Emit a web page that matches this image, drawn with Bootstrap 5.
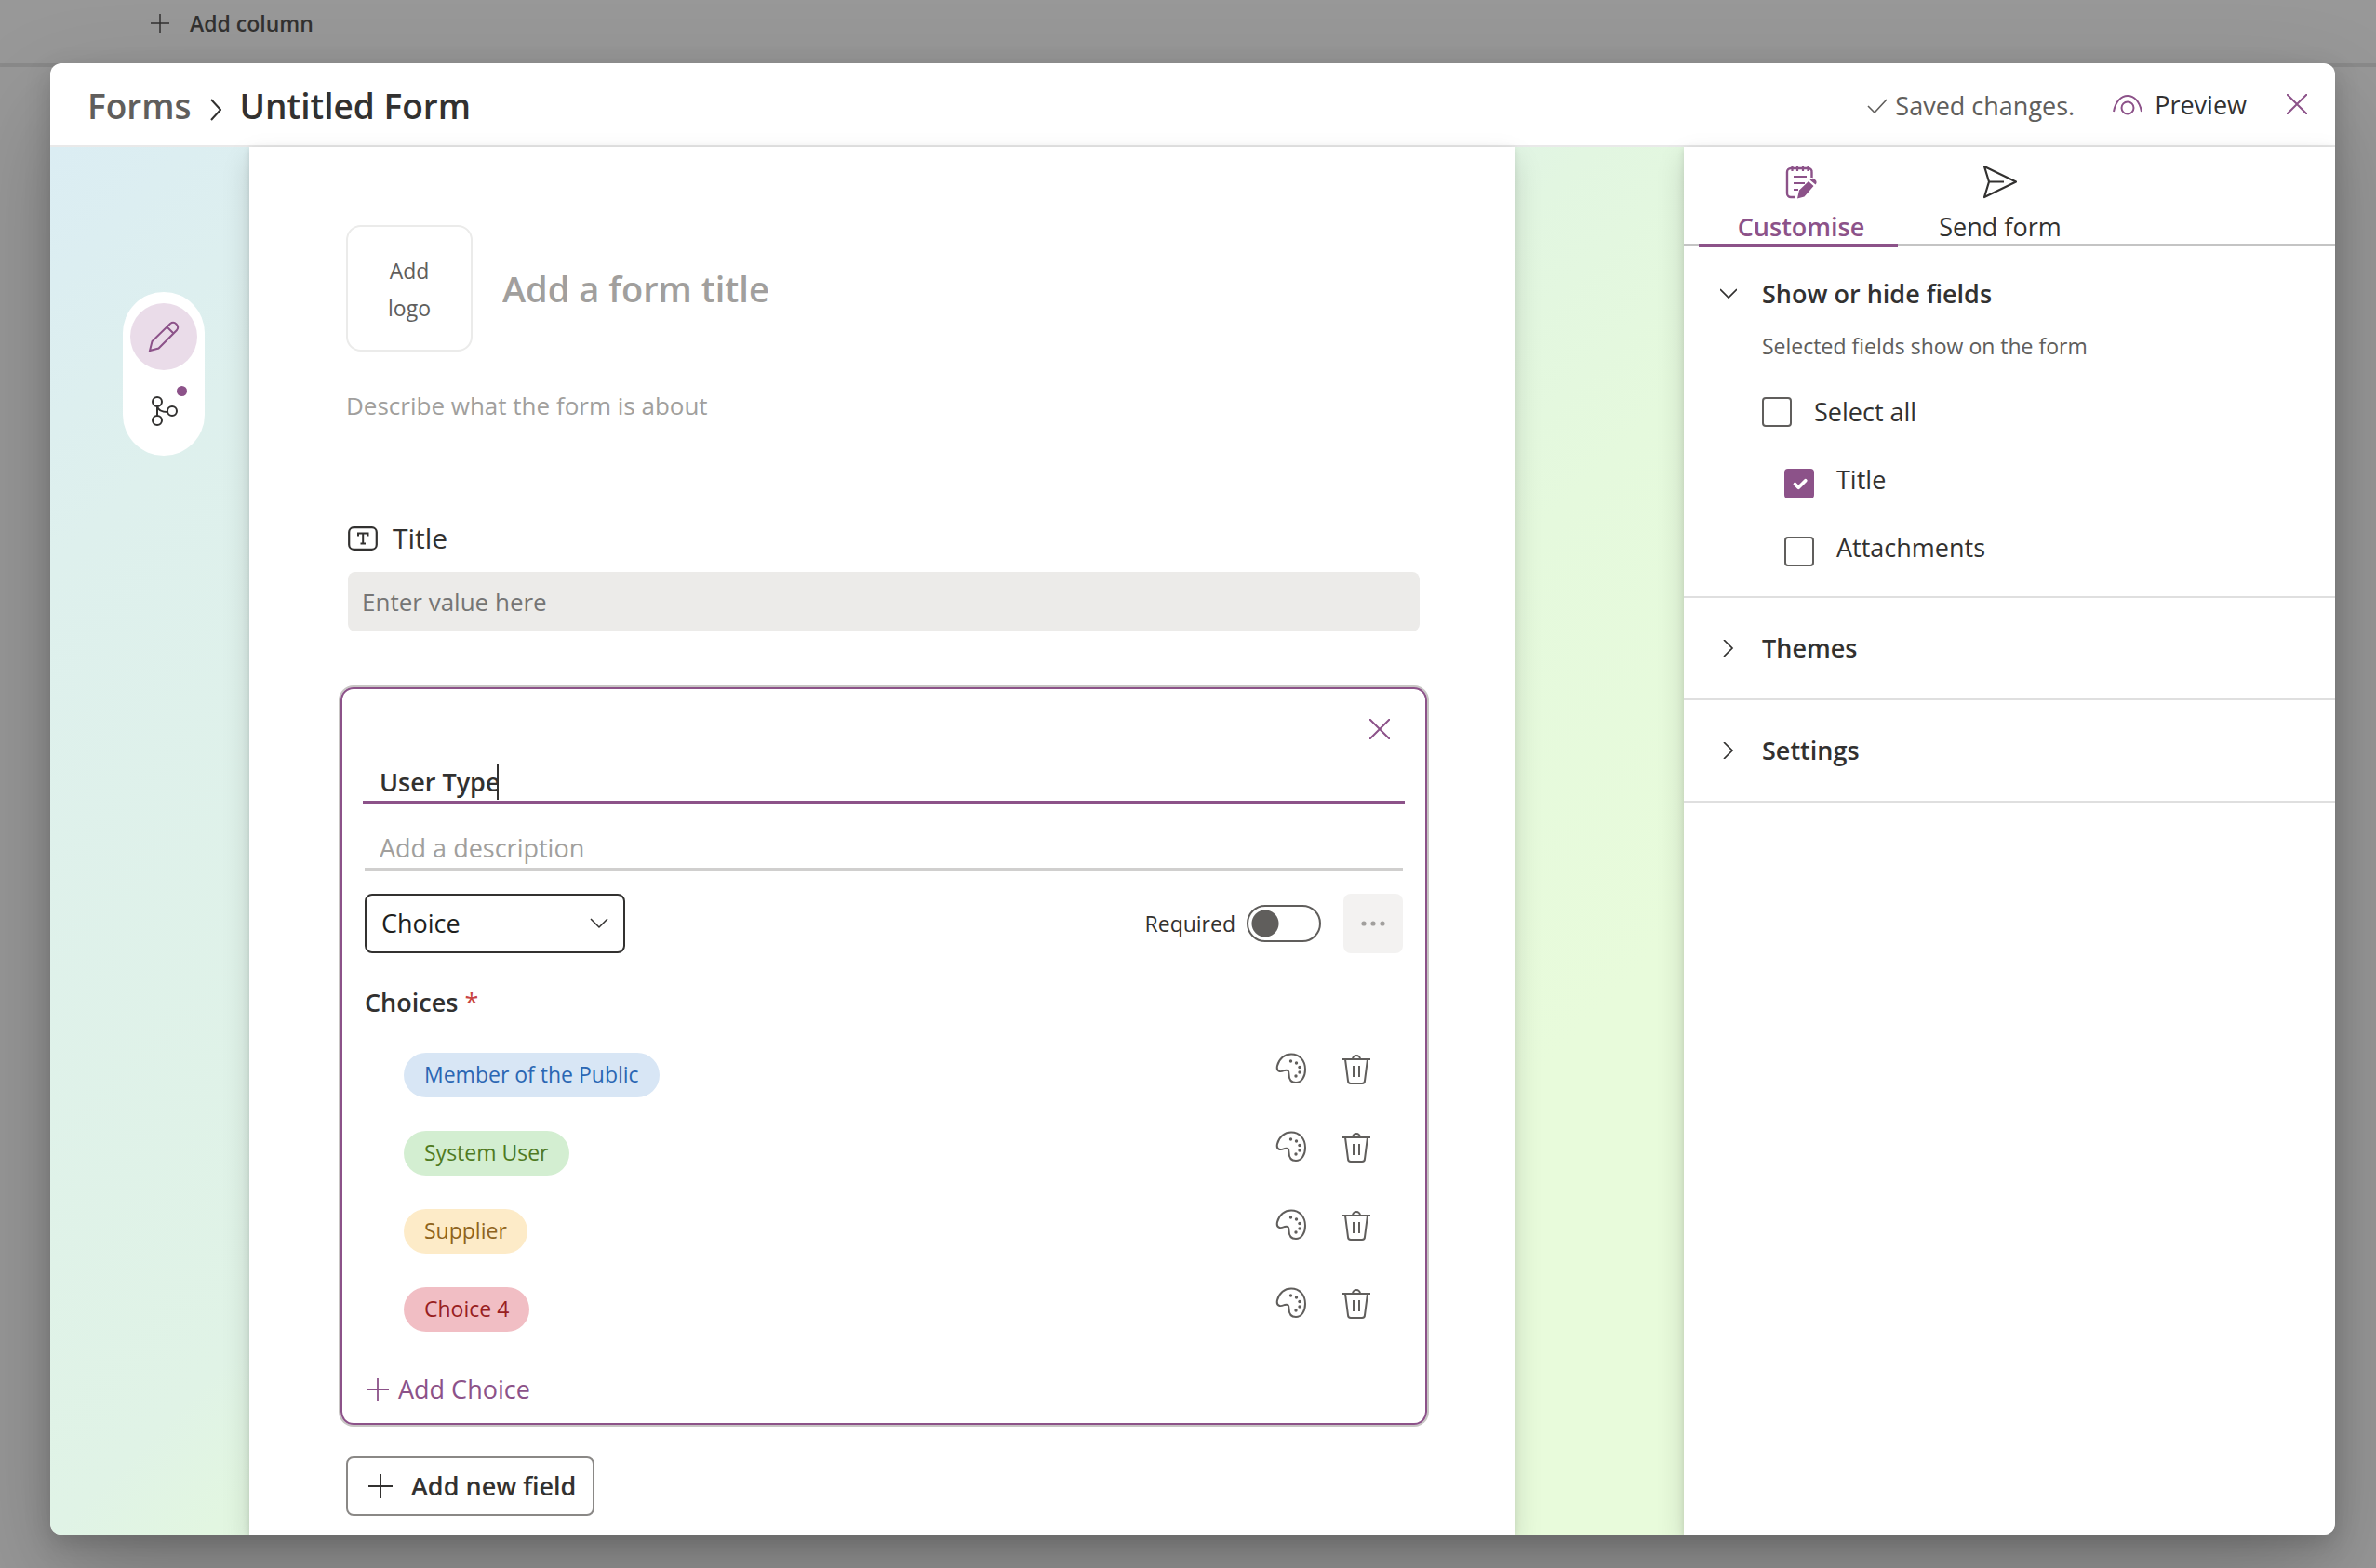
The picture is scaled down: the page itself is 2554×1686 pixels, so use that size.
<!DOCTYPE html>
<html lang="en">
<head>
<meta charset="utf-8">
<meta name="viewport" content="width=device-width, initial-scale=1">
<title>Untitled Form</title>
<link href="https://cdn.jsdelivr.net/npm/bootstrap@5.3.0/dist/css/bootstrap.min.css" rel="stylesheet">
<style>
:root{--plum:#8c5289;--ink:#323130;--soft:#605e5c;--faint:#a19f9d}
body{font-family:"Open Sans","Noto Sans",sans-serif;font-size:27px;line-height:40px;color:var(--ink);background:#989898}
svg{display:block;flex:none;fill:none;stroke:currentColor;stroke-width:2}
button{font:inherit;color:inherit;background:none;border:0;padding:0}
a{color:inherit;text-decoration:none}
.t-sm{font-size:23px}
.t-md{font-size:26px!important}
.t-lg{font-size:38px}
.t-crumb{font-size:37px}
.t-label{font-size:30px}
.soft{color:var(--soft)}
.faint,.faint::placeholder{color:var(--faint);opacity:1}
.plum{color:var(--plum)}
.stage{display:grid;min-height:100vh;overflow:hidden}
.stage>*{grid-area:1/1;min-width:0}
.listbar{height:72px;border-bottom:4px solid #8a8a8a;padding:5px 162px}
.listbar button{gap:22px}
.dialog-window{margin:68px 44px 36px 54px;border-radius:12px;background:#fff;box-shadow:0 51px 115px rgba(0,0,0,.22),0 9px 28px rgba(0,0,0,.18);overflow:hidden}
.dialog-head{height:90px;border-bottom:2px solid #e9e9e9;padding:0 30px 0 40px}
.dialog-head nav svg{margin:8px 20px 0}
.preview{gap:13px;margin:2px 43px 0 41px}
.work{background:linear-gradient(135deg,#dbedf3 0%,#def0ed 14%,#e0f3e6 46%,#e2f6e1 51%,#e5f9dd 62%,#e8fbdb 80%)}
.rail{width:214px;padding:156px 48px 0 78px}
.rail-box{background:#fff;border-radius:44px;padding:12px 8px;height:176px}
.rail-box button{width:72px;height:72px;border-radius:50%}
.rail-box .on{background:#eadce9;color:var(--plum)}
.rail-box button+button{margin-top:8px}
.dot{position:absolute;top:9px;right:11px;width:11px;height:11px;border-radius:50%;background:var(--plum)}
.sheet{background:#fff;padding:84px 94px 20px 98px;margin-right:182px;box-shadow:0 13px 29px rgba(0,0,0,.14),0 2px 7px rgba(0,0,0,.12);min-width:0}
.intro{padding:0 6px}
.intro .about{margin-top:38px}
.field{padding:0 8px;margin-top:103px}
.logo-box{width:136px;height:136px;border:2px solid #ebebea!important;border-radius:16px;padding:2px 30px 0!important}
.bare{border:0;outline:0;background:none;padding:0;font:inherit;color:inherit;min-width:0}
.bare.t-lg{font-size:38px}
.answer{height:64px;border-radius:8px;background:#ecebe9;padding:0 15px}
.editor{border:2px solid var(--plum);border-radius:14px;box-shadow:0 0 0 2px #c8c6c4;padding:23px 22px 16px;margin-top:60px}
.editor-top{height:40px}
.q-name{border-bottom:4px solid var(--plum);height:49px;padding:4px 18px 0;margin-top:12px}
.q-name input{width:126px}
.caret{width:2px;height:38px;background:var(--ink)}
.q-desc{border-bottom:4px solid #d0cfce;height:47px;padding:0 16px;margin:25px 2px 24px}
.q-kind{margin:0 2px}
.kind{width:280px;height:64px;border:2px solid var(--ink);border-radius:8px;padding:0 16px;appearance:none;font:inherit;color:#201f1e;background:#fff url("data:image/svg+xml,%3Csvg xmlns='http://www.w3.org/2000/svg' viewBox='0 0 20 12' fill='none' stroke='%23323130' stroke-width='1.5'%3E%3Cpath d='M1 1l9 9 9-9'/%3E%3C/svg%3E") no-repeat right 16px center/20px 12px}
.switch{appearance:none;width:80px;height:40px;border:2px solid var(--soft);border-radius:20px;margin:0;background:radial-gradient(circle at 18px 18px,var(--soft) 14px,transparent 15px)}
.more{width:64px;height:64px;border-radius:8px;background:#f3f2f1!important}
.q-choices{font-size:27px;line-height:40px;margin:33px 2px 0}
.star{color:#c84343;font-weight:400}
.choices{gap:36px;padding:0 37px 0 44px;margin:34px 0 42px}
.bin{margin-left:38px;padding-top:2px!important}
.pill{height:48px;line-height:47px;border-radius:24px;padding:0 22px}
.p1{background:#d8e6f5;color:#2b66b3}.p2{background:#d3eed1;color:#4f7a22}.p3{background:#fdebc8;color:#8f6420}.p4{background:#f1bec4;color:#98201f}
.add-choice{gap:10px}
.new-field{gap:20px;height:64px;border:2px solid #8a8886!important;border-radius:8px;padding:0 18px 0 22px!important;margin:34px 0 0 6px}
.side{width:700px;background:#fff;box-shadow:0 13px 29px rgba(0,0,0,.14),0 2px 7px rgba(0,0,0,.12)}
.tabs{height:106px;border-bottom:2px solid #c4c4c4;padding-left:16px}
.tabs button{width:214px;height:108px;padding:17px 0 0 6px;border-bottom:4px solid transparent;line-height:36px}
.tabs .on{border-color:var(--plum);color:var(--plum)}
.tabs svg{margin:0 auto 12px}
.group{border-bottom:2px solid #dfdfdf;padding:34px 39px}
.group.open{padding:32px 39px 28px}
.group>button{gap:27px}
.opts{padding-left:45px}
.hint{padding:16px 0 31px}
.opt{height:40px;margin-top:33px}
.hint+.opt{margin:0 0 37px}
.hint+.opt+.opt{margin-top:0}
.tick{margin:0;width:32px;height:32px;border:2px solid var(--soft);border-radius:4px!important;flex:none}
.tick:checked{background-color:var(--plum);border-color:var(--plum);background-size:25px}
.lift{padding-bottom:8px}
</style>
</head>
<body>
<div class="stage">
  <div class="listbar">
    <button class="d-flex align-items-center t-sm fw-semibold" type="button">
      <svg width="20" height="20" viewBox="0 0 20 20"><path d="M10 0v20M0 10h20" stroke-width="1.5"/></svg>Add column
    </button>
  </div>
  <main class="dialog-window d-flex flex-column">
    <header class="dialog-head d-flex align-items-center">
      <nav class="d-flex align-items-center t-crumb fw-semibold pt-1" aria-label="Breadcrumb">
        <a href="#" class="soft">Forms</a>
        <svg width="12" height="24" viewBox="0 0 12 24"><path d="M1 1l10 11L1 23"/></svg>
        <span>Untitled Form</span>
      </nav>
      <div class="d-flex align-items-center ms-auto pt-1 soft">
        <svg width="22" height="16" class="me-2" viewBox="0 0 22 16"><path d="M1 8l7 7L21 1" stroke-width="1.6"/></svg>Saved changes.
      </div>
      <button class="preview d-flex align-items-center" type="button">
        <svg width="32" height="22" class="plum" viewBox="0 0 32 22"><path d="M1 18C3 7 9 1 16 1s13 6 15 17"/><circle cx="16" cy="14" r="6.500"/></svg>Preview
      </button>
      <button type="button" class="plum" aria-label="Close"><svg width="22" height="22" viewBox="0 0 22 22"><path d="M0 0l22 22M22 0L0 22"/></svg></button>
    </header>
    <div class="d-flex flex-grow-1">
      <div class="work d-flex flex-grow-1">
        <div class="rail">
          <div class="rail-box">
            <button type="button" class="on d-flex align-items-center justify-content-center" aria-label="Edit">
              <svg width="34" height="34" viewBox="0 0 34 34"><path d="M2 32l2.500-10L24 3a5 5 0 0 1 7 7L11.500 29.500zM20.500 6.500l7 7"/></svg>
            </button>
            <button type="button" class="position-relative d-flex align-items-center justify-content-center" aria-label="Branching">
              <svg width="30" height="34" viewBox="0 0 30 34" stroke-width="2.400"><circle cx="8" cy="7" r="5"/><circle cx="8" cy="27" r="5"/><circle cx="24" cy="17" r="5"/><path d="M8 12v10M8 12c1 4 5 6 11 6"/></svg>
              <span class="dot"></span>
            </button>
          </div>
        </div>
        <section class="sheet flex-grow-1">
          <div class="intro">
            <div class="d-flex align-items-center">
              <button type="button" class="logo-box t-sm soft">Add logo</button>
              <input class="bare t-lg fw-semibold faint flex-grow-1 ms-4 ps-2" type="text" placeholder="Add a form title" aria-label="Form title">
            </div>
            <input class="bare about t-md faint d-block w-100" type="text" placeholder="Describe what the form is about" aria-label="Form description">
          </div>
          <div class="field">
            <label for="answer" class="d-flex align-items-center gap-3 mb-3 t-label">
              <svg width="32" height="26" viewBox="0 0 32 26"><rect x="1.200" y="1.200" width="29.600" height="23.600" rx="5" stroke-width="2.200"/><path d="M11 10.500V7.500h10.500v3M16.200 7.500v11M13.500 18.500h5.500" stroke-width="2"/></svg>Title
            </label>
            <input id="answer" class="bare answer t-md w-100" type="text" placeholder="Enter value here">
          </div>
          <div class="editor">
            <div class="editor-top d-flex justify-content-end align-items-center plum pe-3"><button type="button" aria-label="Close field"><svg width="22" height="22" viewBox="0 0 22 22"><path d="M0 0l22 22M22 0L0 22"/></svg></button></div>
            <div class="q-name d-flex align-items-center fw-semibold">
              <input class="bare" type="text" value="User Type" aria-label="Field name"><span class="caret"></span>
            </div>
            <div class="q-desc d-flex align-items-center"><input class="bare faint w-100" type="text" placeholder="Add a description" aria-label="Description"></div>
            <div class="q-kind d-flex align-items-center">
              <select class="kind" aria-label="Field type"><option>Choice</option></select>
              <label for="req" class="t-sm ms-auto me-2 pe-1">Required</label>
              <input id="req" type="checkbox" role="switch" class="switch">
              <button type="button" class="more d-flex align-items-center justify-content-center ms-4 faint" aria-label="More"><svg width="26" height="6" viewBox="0 0 26 6"><g fill="#a19f9d" stroke="none"><circle cx="3" cy="3" r="2.600"/><circle cx="13" cy="3" r="2.600"/><circle cx="23" cy="3" r="2.600"/></g></svg></button>
            </div>
            <h2 class="q-choices fw-semibold">Choices <span class="star">*</span></h2>
            <div class="choices d-flex flex-column" id="choices">
              <div class="d-flex"><span class="pill p1 t-sm me-auto">Member of the Public</span></div>
              <div class="d-flex"><span class="pill p2 t-sm me-auto">System User</span></div>
              <div class="d-flex"><span class="pill p3 t-sm me-auto">Supplier</span></div>
              <div class="d-flex"><span class="pill p4 t-sm me-auto">Choice 4</span></div>
            </div>
            <button type="button" class="add-choice d-flex align-items-center plum ms-1"><svg width="24" height="24" viewBox="0 0 24 24"><path d="M12 0v24M0 12h24" stroke-width="1.800"/></svg>Add Choice</button>
          </div>
          <button type="button" class="new-field d-flex align-items-center fw-semibold"><svg width="26" height="26" viewBox="0 0 26 26"><path d="M13 0v26M0 13h26"/></svg>Add new field</button>
        </section>
      </div>
      <aside class="side flex-shrink-0">
        <div class="tabs d-flex">
          <button type="button" class="on fw-semibold">
            <svg width="34" height="38" viewBox="0 0 34 38"><path d="M11 36H6a4 4 0 0 1-4-4V9a4 4 0 0 1 4-4h19a3.500 3.500 0 0 1 3.500 4v6" stroke-width="2.400"/><path d="M7.500 2v6M13 2v6M19 2v6M24.500 2v6M9 14h14M9 21h12M9 28h5" stroke-width="2.200"/><path d="M13 37.500l2-9L25 19l5.500 5-10 11.500zM26.500 17.500a3.900 3.900 0 0 1 6 5z" fill="currentColor" stroke="none"/></svg>Customise
          </button>
          <button type="button">
            <svg width="38" height="38" viewBox="0 0 38 38"><path d="M2 3l34 16.500L2 36l5-16.500zM7 19.500h16" stroke-width="2.200" stroke-linejoin="round"/></svg>Send form
          </button>
        </div>
        <div class="group open">
          <button type="button" class="d-flex align-items-center fw-semibold"><svg width="18" height="18" viewBox="0 0 18 18"><path d="M0 4l9 9 9-9" stroke-width="1.700"/></svg>Show or hide fields</button>
          <div class="opts">
            <div class="hint t-sm soft">Selected fields show on the form</div>
            <div class="opt d-flex align-items-center"><input id="all" class="form-check-input tick" type="checkbox"><label for="all" class="ms-4">Select all</label></div>
            <div class="opt d-flex align-items-center ms-4"><input id="c1" class="form-check-input tick" type="checkbox" checked><label for="c1" class="ms-4 lift">Title</label></div>
            <div class="opt d-flex align-items-center ms-4"><input id="c2" class="form-check-input tick" type="checkbox"><label for="c2" class="ms-4 lift">Attachments</label></div>
          </div>
        </div>
        <div class="group"><button type="button" class="d-flex align-items-center fw-semibold"><svg width="18" height="18" viewBox="0 0 18 18"><path d="M4 0l9 9-9 9" stroke-width="1.700"/></svg>Themes</button></div>
        <div class="group"><button type="button" class="d-flex align-items-center fw-semibold"><svg width="18" height="18" viewBox="0 0 18 18"><path d="M4 0l9 9-9 9" stroke-width="1.700"/></svg>Settings</button></div>
      </aside>
    </div>
  </main>
</div>
<template id="tools">
  <button type="button" class="soft align-self-start" aria-label="Colour"><svg width="34" height="34" viewBox="0 0 34 34"><path d="M2 14C4 6 10 1.500 17 1.500c9 0 15 7 15 16.500 0 8-4 14-10 14-5 0-7.500-3.500-7.500-9 0-4-1.500-5-4.500-4-2 .700-4 1.500-5.500 1C1.500 19 1.300 17 2 14z" stroke-width="2"/><g fill="currentColor" stroke="none"><circle cx="16.500" cy="9" r="1.700"/><circle cx="22.500" cy="11" r="1.700"/><circle cx="26" cy="15.500" r="1.700"/><circle cx="26" cy="21" r="1.700"/><circle cx="22" cy="25" r="1.700"/></g></svg></button>
  <button type="button" class="bin soft align-self-start" aria-label="Delete"><svg width="30" height="32" viewBox="0 0 30 32"><path d="M0 5h30M11 5a4 4 0 0 1 8 0M3 5l3 23a3 3 0 0 0 3 3h12a3 3 0 0 0 3-3l3-23M12 12v12M18 12v12"/></svg></button>
</template>
<script>
document.querySelectorAll('#choices>div').forEach(function(row){
  row.appendChild(document.getElementById('tools').content.cloneNode(true));
});
</script>
<script src="https://cdn.jsdelivr.net/npm/bootstrap@5.3.0/dist/js/bootstrap.bundle.min.js"></script>
</body>
</html>
